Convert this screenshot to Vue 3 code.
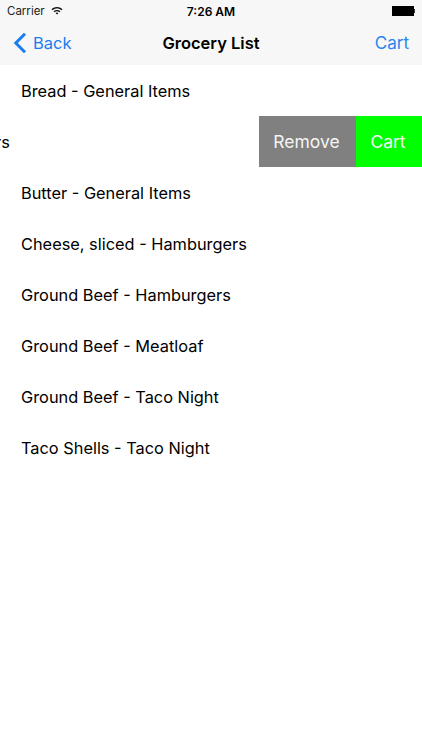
<script setup>
const before = ['Bread - General Items']
const after = [
  'Butter - General Items',
  'Cheese, sliced - Hamburgers',
  'Ground Beef - Hamburgers',
  'Ground Beef - Meatloaf',
  'Ground Beef - Taco Night',
  'Taco Shells - Taco Night'
]
</script>

<template>
  <div class="screen">
    <header class="bar">
      <div class="status">
        <div class="status-left">
          <span>Carrier</span>
          <svg class="wifi" viewBox="0 0 14 10" width="12" height="9">
            <path d="M0.6 3.4C4.2 0 9.8 0 13.4 3.4L12.3 4.6C9.3 1.9 4.7 1.9 1.7 4.6Z" fill="#111"/>
            <path d="M3 5.8C5.3 3.8 8.7 3.8 11 5.8L9.9 7C8.2 5.6 5.8 5.6 4.1 7Z" fill="#111"/>
            <path d="M5.3 8C6.3 7.2 7.7 7.2 8.7 8L7 9.8Z" fill="#111"/>
          </svg>
        </div>
        <span class="time">7:26 AM</span>
        <div class="battery"><i class="cell"></i><i class="nub"></i></div>
      </div>
      <nav class="nav">
        <div class="back">
          <svg viewBox="0 0 14 22" width="14" height="22">
            <path d="M12 1.8L2.8 11L12 20.2" fill="none" stroke="#1a7ef0" stroke-width="3"/>
          </svg>
          <span>Back</span>
        </div>
        <div class="title">Grocery List</div>
        <div class="cart-link">Cart</div>
      </nav>
    </header>
    <main>
      <div v-for="item in before" :key="item" class="row">{{ item }}</div>
      <div class="row swiped">
        <span class="shifted">Buns - Hamburgers</span>
        <div class="actions">
          <div class="action remove">Remove</div>
          <div class="action cart">Cart</div>
        </div>
      </div>
      <div v-for="item in after" :key="item" class="row">{{ item }}</div>
    </main>
  </div>
</template>

<style scoped>
.screen {
  width: 422px;
  height: 750px;
  background: #fff;
  overflow: hidden;
  font-family: Inter, "Liberation Sans", sans-serif;
  color: #000;
}
.bar {
  background: #f7f7f7;
  height: 65px;
}
.status {
  height: 20px;
  padding: 1px 7px 0;
  display: grid;
  grid-template-columns: 1fr auto 1fr;
  align-items: center;
  font-size: 11.5px;
}
.status-left {
  display: flex;
  align-items: center;
  gap: 6px;
  color: #222;
}
.wifi { margin-top: -2px; }
.time { font-weight: 600; font-size: 12px; }
.battery {
  display: flex;
  align-items: center;
  justify-content: flex-end;
}
.cell { width: 22px; height: 10px; background: #000; }
.nub { width: 1.5px; height: 4px; background: #333; }
.nav {
  height: 44px;
  padding: 0 13px;
  display: grid;
  grid-template-columns: 1fr auto 1fr;
  align-items: center;
}
.back {
  display: flex;
  align-items: center;
  gap: 6px;
  color: #1a7ef0;
  font-size: 16.5px;
}
.title {
  font-weight: 600;
  font-size: 16.5px;
  color: #000;
}
.cart-link {
  justify-self: end;
  color: #2a85ec;
  font-size: 17px;
}
.row {
  height: 51px;
  padding-left: 21px;
  display: flex;
  align-items: center;
  font-size: 16.35px;
  white-space: nowrap;
  overflow: hidden;
}
.swiped { padding-left: 0; justify-content: space-between; }
.shifted { margin-left: -141px; }
.actions { display: flex; height: 100%; }
.action {
  box-sizing: border-box;
  display: flex;
  align-items: center;
  justify-content: center;
  color: #f4f4f4;
  font-size: 17.5px;
  padding-right: 2px;
}
.remove { width: 97px; background: #808080; }
.cart { width: 66px; background: #00ff00; }
</style>
